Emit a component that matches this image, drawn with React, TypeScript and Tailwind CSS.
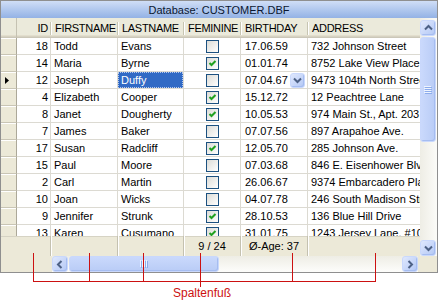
import React from "react";

type R = { id: number; first: string; last: string; fem: boolean; bday: string; addr: string };

const data: R[] = [
  { id: 18, first: "Todd", last: "Evans", fem: false, bday: "17.06.59", addr: "732 Johnson Street" },
  { id: 14, first: "Maria", last: "Byrne", fem: true, bday: "01.01.74", addr: "8752 Lake View Place" },
  { id: 12, first: "Joseph", last: "Duffy", fem: false, bday: "07.04.67", addr: "9473 104th North Street" },
  { id: 4, first: "Elizabeth", last: "Cooper", fem: true, bday: "15.12.72", addr: "12 Peachtree Lane" },
  { id: 8, first: "Janet", last: "Dougherty", fem: true, bday: "10.05.53", addr: "974 Main St., Apt. 203" },
  { id: 7, first: "James", last: "Baker", fem: false, bday: "07.07.56", addr: "897 Arapahoe Ave." },
  { id: 17, first: "Susan", last: "Radcliff", fem: true, bday: "12.05.70", addr: "285 Johnson Ave." },
  { id: 15, first: "Paul", last: "Moore", fem: false, bday: "07.03.68", addr: "846 E. Eisenhower Blvd." },
  { id: 2, first: "Carl", last: "Martin", fem: false, bday: "26.06.67", addr: "9374 Embarcadero Place" },
  { id: 10, first: "Joan", last: "Wicks", fem: false, bday: "04.07.78", addr: "246 South Madison Street" },
  { id: 9, first: "Jennifer", last: "Strunk", fem: true, bday: "28.10.53", addr: "136 Blue Hill Drive" },
  { id: 13, first: "Karen", last: "Cusumano", fem: true, bday: "31.01.75", addr: "1243 Jersey Lane, #10" },
];

const cell =
  "h-full shrink-0 border-r border-b border-[#dcdad2] flex items-center overflow-hidden whitespace-nowrap";

function CheckBox({ checked }: { checked: boolean }) {
  return (
    <div className="w-[13px] h-[13px] border border-[#1c5180] bg-linear-to-br from-[#dcdcd7] to-white flex items-center justify-center">
      {checked && (
        <svg width="9" height="9" viewBox="0 0 9 9">
          <path d="M1.5 4 L3.5 6 L7.5 2" stroke="#21a121" strokeWidth="2" fill="none" />
        </svg>
      )}
    </div>
  );
}

function Arrow({ dir }: { dir: "up" | "down" | "left" | "right" }) {
  const d =
    dir === "up"
      ? "M1 5.5 L4.5 2 L8 5.5"
      : dir === "down"
      ? "M1 2.5 L4.5 6 L8 2.5"
      : dir === "left"
      ? "M5.5 1 L2 4.5 L5.5 8"
      : "M2.5 1 L6 4.5 L2.5 8";
  return (
    <svg width="9" height="9" viewBox="0 0 9 9">
      <path d={d} stroke="#4d6185" strokeWidth="2" fill="none" />
    </svg>
  );
}

function Btn({ dir, cls }: { dir: "up" | "down" | "left" | "right"; cls: string }) {
  return (
    <div
      className={
        cls +
        " shrink-0 rounded-[3px] border border-[#c9d8fc] bg-linear-to-br from-[#dfe8fd] to-[#b4c8f5] shadow-[inset_-1px_-1px_0_#a6bdf0] flex items-center justify-center"
      }
    >
      <Arrow dir={dir} />
    </div>
  );
}

function HeaderCell({ w, right, children }: { w: string; right?: boolean; children?: React.ReactNode }) {
  return (
    <div className={w + " shrink-0 h-full flex items-center"}>
      <span
        className={
          "flex-1 whitespace-nowrap overflow-hidden tracking-[-0.3px] " + (right ? "text-right pr-[2px]" : "pl-[4px]")
        }
      >
        {children}
      </span>
      <span className="w-[1px] h-[13px] bg-[#c7c5b2] shadow-[1px_0_0_#ffffff]" />
    </div>
  );
}

export default function App() {
  return (
    <div className="relative w-[440px] h-[302px] bg-white overflow-hidden font-['Liberation_Sans',Arial,sans-serif] text-[11px] leading-none text-black">
      <div className="w-[438px] flex flex-col border border-[#8f8f8f]">
        {/* title bar */}
        <div className="h-[17px] bg-linear-to-b from-[#d0def6] to-[#93b2e5] flex items-center justify-center pt-[2px] text-[#0b1730]">
          Database: CUSTOMER.DBF
        </div>

        <div className="flex">
          <div className="w-[419px] flex flex-col">
            {/* header */}
            <div className="h-[20px] flex bg-[#ebeadb] shadow-[inset_0_-1px_0_#cbc7b8,inset_0_-2px_0_#d6d2c2,inset_0_-3px_0_#e2decd]">
              <div className="w-[16px] shrink-0 h-full border-r border-[#c5c2b2]" />
              <HeaderCell w="w-[34px]" right>
                ID
              </HeaderCell>
              <HeaderCell w="w-[67px]">FIRSTNAME</HeaderCell>
              <HeaderCell w="w-[66px]">LASTNAME</HeaderCell>
              <HeaderCell w="w-[57px]">FEMININE</HeaderCell>
              <HeaderCell w="w-[67px]">BIRTHDAY</HeaderCell>
              <div className="flex-1 h-full flex items-center pl-[4px] tracking-[-0.3px]">ADDRESS</div>
            </div>

            {/* body */}
            <div className="h-[198px] overflow-hidden bg-white">
              {data.map((r, i) => (
                <div key={r.id} className="flex h-[17px]">
                  <div className="w-[16px] shrink-0 h-full bg-[#ece9d8] border-r border-b border-r-[#aca899] border-b-[#c9c5b5] shadow-[inset_0_1px_0_#ffffff] flex items-center pl-[4px]">
                    {i === 2 && (
                      <svg width="4" height="7" viewBox="0 0 4 7">
                        <path d="M0 0 L4 3.5 L0 7 Z" fill="#000" />
                      </svg>
                    )}
                  </div>
                  <div className={cell + " w-[34px] justify-end pr-[2px]"}>{r.id}</div>
                  <div className={cell + " w-[67px] pl-[3px]"}>{r.first}</div>
                  {i === 2 ? (
                    <div className={cell + " w-[66px]"}>
                      <div className="w-full h-full bg-[#316ac5] text-white flex items-center pl-[2px] border border-dotted border-[#b9cbee]">
                        {r.last}
                      </div>
                    </div>
                  ) : (
                    <div className={cell + " w-[66px] pl-[3px]"}>{r.last}</div>
                  )}
                  <div className={cell + " w-[57px] justify-center"}>
                    <CheckBox checked={r.fem} />
                  </div>
                  <div className={cell + " w-[67px] pl-[4px]"}>
                    <span>{r.bday}</span>
                    {i === 2 && <Btn dir="down" cls="ml-auto mr-[2px] w-[15px] h-[15px]" />}
                  </div>
                  <div className="h-full flex-1 border-b border-[#dcdad2] flex items-center overflow-hidden whitespace-nowrap pl-[3px]">
                    {r.addr}
                  </div>
                </div>
              ))}
            </div>

            {/* footer */}
            <div className="h-[20px] flex bg-[#ece9d8] shadow-[inset_0_1px_0_#d6d3c4]">
              <div className="w-[50px] shrink-0 h-full border-r border-[#c4c1b0]" />
              <div className="w-[67px] shrink-0 h-full border-r border-[#c4c1b0] shadow-[inset_1px_0_0_#ffffff]" />
              <div className="w-[66px] shrink-0 h-full border-r border-[#c4c1b0] shadow-[inset_1px_0_0_#ffffff]" />
              <div className="w-[57px] shrink-0 h-full border-r border-[#c4c1b0] shadow-[inset_1px_0_0_#ffffff] flex items-center justify-center">
                9 / 24
              </div>
              <div className="w-[67px] shrink-0 h-full border-r border-[#c4c1b0] shadow-[inset_1px_0_0_#ffffff] flex items-center justify-center">
                Ø-Age: 37
              </div>
              <div className="flex-1 h-full shadow-[inset_1px_0_0_#ffffff]" />
            </div>
          </div>

          {/* vertical scrollbar */}
          <div className="w-[17px] flex flex-col bg-linear-to-r from-[#eeede5] to-[#fbfbf8]">
            <Btn dir="up" cls="mt-[2px] w-[16px] h-[16px]" />
            <div className="mt-[1px] w-[16px] h-[105px] rounded-[3px] border border-[#c9d8fc] bg-linear-to-r from-[#cad9fc] to-[#b9ccf6] shadow-[inset_-1px_-1px_0_#a6bdf0] flex items-center justify-center">
              <svg width="8" height="8" viewBox="0 0 8 8">
                <path d="M0 0.5h7M0 2.5h7M0 4.5h7M0 6.5h7" stroke="#eef4fe" />
                <path d="M1 1.5h7M1 3.5h7M1 5.5h7M1 7.5h7" stroke="#8cacec" />
              </svg>
            </div>
            <Btn dir="down" cls="mt-auto w-[16px] h-[16px]" />
          </div>
        </div>

        {/* bottom row with horizontal scrollbar */}
        <div className="h-[16px] flex bg-[#ece9d8]">
          <div className="w-[51px] shrink-0" />
          <div className="w-[366px] shrink-0 flex bg-linear-to-b from-[#eeede5] to-[#fdfdfb]">
            <Btn dir="left" cls="w-[16px] h-[16px]" />
            <div className="ml-[1px] w-[150px] h-[16px] rounded-[3px] border border-[#c9d8fc] bg-linear-to-b from-[#cad9fc] to-[#b9ccf6] shadow-[inset_-1px_-1px_0_#a6bdf0] flex items-center justify-center">
              <svg width="8" height="8" viewBox="0 0 8 8">
                <path d="M0.5 0v7M2.5 0v7M4.5 0v7M6.5 0v7" stroke="#eef4fe" />
                <path d="M1.5 1v7M3.5 1v7M5.5 1v7M7.5 1v7" stroke="#8cacec" />
              </svg>
            </div>
            <div className="flex-1" />
            <Btn dir="right" cls="w-[16px] h-[16px]" />
          </div>
          <div className="flex-1" />
        </div>
      </div>

      {/* annotation overlay */}
      <div className="absolute left-[33px] top-[281px] w-[343px] h-[1px] bg-[#cc1111]" />
      <div className="absolute left-[33px] top-[253px] w-[1px] h-[29px] bg-[#cc1111]" />
      <div className="absolute left-[89px] top-[253px] w-[1px] h-[29px] bg-[#cc1111]" />
      <div className="absolute left-[143px] top-[253px] w-[1px] h-[29px] bg-[#cc1111]" />
      <div className="absolute left-[200px] top-[253px] w-[1px] h-[34px] bg-[#cc1111]" />
      <div className="absolute left-[292px] top-[253px] w-[1px] h-[29px] bg-[#cc1111]" />
      <div className="absolute left-[375px] top-[253px] w-[1px] h-[29px] bg-[#cc1111]" />
      <div className="absolute left-[173px] top-[286px] text-[12px] leading-[14px] text-[#cc1111]">Spaltenfuß</div>
    </div>
  );
}
